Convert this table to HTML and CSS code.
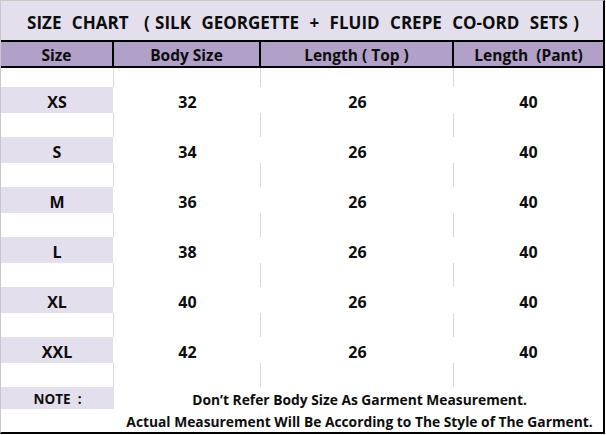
FILE: index.html
```html
<!DOCTYPE html>
<html>
<head>
<meta charset="utf-8">
<link rel="stylesheet" href="styles.css">
</head>
<body>
<div class="sheet">
  <div class="title">SIZE  CHART   ( SILK  GEORGETTE  +  FLUID  CREPE  CO-ORD  SETS )</div>
  <div class="grid">
    <div class="hd sep">Size</div>
    <div class="hd sep">Body Size</div>
    <div class="hd sep">Length ( Top )</div>
    <div class="hd">Length  (Pant)</div>

    <div class="gap"></div><div class="gap"></div><div class="gap"></div><div class="gap last"></div>

    <div class="sz">XS</div><div class="val">32</div><div class="val">26</div><div class="val">40</div>
    <div class="gap"></div><div class="gap"></div><div class="gap"></div><div class="gap last"></div>
    <div class="sz">S</div><div class="val">34</div><div class="val">26</div><div class="val">40</div>
    <div class="gap"></div><div class="gap"></div><div class="gap"></div><div class="gap last"></div>
    <div class="sz">M</div><div class="val">36</div><div class="val">26</div><div class="val">40</div>
    <div class="gap"></div><div class="gap"></div><div class="gap"></div><div class="gap last"></div>
    <div class="sz">L</div><div class="val">38</div><div class="val">26</div><div class="val">40</div>
    <div class="gap"></div><div class="gap"></div><div class="gap"></div><div class="gap last"></div>
    <div class="sz">XL</div><div class="val">40</div><div class="val">26</div><div class="val">40</div>
    <div class="gap"></div><div class="gap"></div><div class="gap"></div><div class="gap last"></div>
    <div class="sz">XXL</div><div class="val">42</div><div class="val">26</div><div class="val">40</div>
    <div class="gap"></div><div class="gap"></div><div class="gap"></div><div class="gap last"></div>

    <div class="note-label">NOTE  :</div>
    <div class="note">Don’t Refer Body Size As Garment Measurement.</div>
    <div class="note-empty"></div>
    <div class="note">Actual Measurement Will Be According to The Style of The Garment.</div>
  </div>
</div>
</body>
</html>
```

FILE: styles.css
```css
* { box-sizing: border-box; }
html, body { margin: 0; padding: 0; background: #ffffff; }
body {
  font-family: "Open Sans", "Liberation Sans", sans-serif;
  font-weight: 700;
  color: #0d0d0d;
}
.sheet {
  width: 605px;
  height: 434px;
  border-top: 1px solid #c8c8c8;
  border-left: 1px solid #c8c8c8;
  border-right: 2px solid #000;
  border-bottom: 2px solid #000;
  display: flex;
  flex-direction: column;
}
.title {
  height: 39px;
  background: #e4dfec;
  display: flex;
  align-items: center;
  justify-content: center;
  white-space: pre;
  font-size: 17px;
  word-spacing: 0.8px;
  padding-top: 3px;
  padding-left: 2px;
}
.grid {
  display: grid;
  grid-template-columns: 113px 147px 193px 149px;
  grid-template-rows: 28px 19px repeat(5, 26px 24px) 26px 24px 22px 23px;
}
.grid > div {
  display: flex;
  align-items: center;
  justify-content: center;
  white-space: pre;
}
.hd {
  background: #b1a0c7;
  border-top: 2px solid #000;
  border-bottom: 2px solid #000;
  font-size: 15.5px;
  padding-top: 1px;
}
.hd.sep { border-right: 2px solid #000; }
.gap { border-right: 1px solid #d9d9d9; }
.gap.last { border-right: 0; }
.sz {
  background: #e4dfec;
  border-right: 1px solid #fff;
  font-size: 16px;
  padding-top: 3px;
}
.val {
  font-size: 16px;
  padding-top: 3px;
}
.note-label {
  background: #e4dfec;
  font-size: 13.5px;
  padding-top: 2px;
}
.note {
  grid-column: span 3;
  font-size: 13.8px;
  padding-top: 2px;
  padding-left: 2px;
}
```
